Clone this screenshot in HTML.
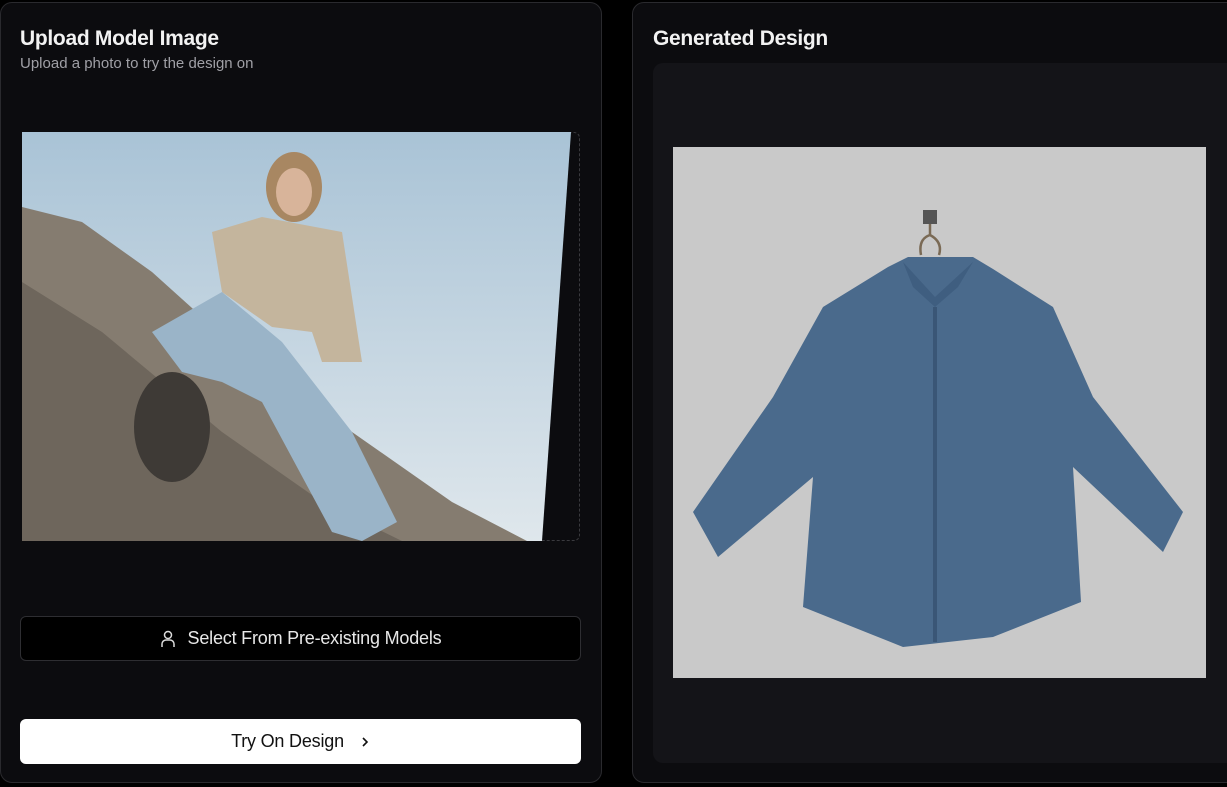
<!DOCTYPE html>
<html><head><style>
body{margin:0;width:1227px;height:787px;background:#000;font-family:"Liberation Sans",sans-serif;overflow:hidden;position:relative}
.card{position:absolute;top:2px;height:781px;background:#0c0c0f;border:1px solid #2a2a2e;border-radius:12px;box-sizing:border-box}
h2{position:absolute;margin:0;color:#f2f2f2;font-size:21px;font-weight:bold;letter-spacing:-0.3px}
.sub{position:absolute;color:#a0a0a6;font-size:15px;letter-spacing:0}
.btn{position:absolute;left:20px;width:561px;border-radius:6px;box-sizing:border-box;display:flex;align-items:center;justify-content:center;font-size:18px;letter-spacing:-0.2px}
</style></head><body>
<div class="card" style="left:0;width:602px"></div>
<h2 style="left:20px;top:27px">Upload Model Image</h2>
<div class="sub" style="left:20px;top:55px">Upload a photo to try the design on</div>
<div style="position:absolute;left:22px;top:132px;width:558px;height:409px;border:1px dashed #3a3a3e;border-radius:6px;box-sizing:border-box"></div>
<svg style="position:absolute;left:22px;top:132px" width="558" height="409">
<defs><linearGradient id="sky" x1="0" y1="0" x2="0" y2="1"><stop offset="0" stop-color="#a9c3d6"/><stop offset="1" stop-color="#dfe7ec"/></linearGradient></defs>
<polygon points="0,0 549,0 520,409 0,409" fill="url(#sky)"/>
<polygon points="0,75 60,90 130,140 230,230 330,300 430,370 505,409 0,409" fill="#857c70"/>
<polygon points="0,150 80,200 200,300 300,370 380,409 0,409" fill="#6e665c"/>
<path d="M190,100 L240,85 L320,100 L340,230 L300,230 L290,200 L250,195 L200,160 Z" fill="#c4b59d"/>
<path d="M130,200 L200,160 L260,210 L330,300 L375,390 L340,409 L310,400 L240,270 L200,250 L160,240 Z" fill="#9ab4c8"/>
<ellipse cx="150" cy="295" rx="38" ry="55" fill="#3e3a36"/>
<ellipse cx="272" cy="55" rx="28" ry="35" fill="#a88762"/>
<ellipse cx="272" cy="60" rx="18" ry="24" fill="#d8b49a"/>
</svg>
<div class="btn" style="top:616px;height:45px;background:#000;border:1px solid #2e2e32;color:#e8e8e8">
<svg width="16" height="18" viewBox="0 0 16 18" style="margin-right:12px"><circle cx="8" cy="5" r="3.5" fill="none" stroke="#ddd" stroke-width="1.5"/><path d="M2,17 V14 A4,4 0 0 1 6,10 H10 A4,4 0 0 1 14,14 V17" fill="none" stroke="#ddd" stroke-width="1.5"/></svg>Select From Pre-existing Models</div>
<div class="btn" style="top:719px;height:45px;background:#fff;color:#111">Try On Design<svg width="10" height="12" viewBox="0 0 10 12" style="margin-left:16px"><path d="M3,2 L7,6 L3,10" fill="none" stroke="#111" stroke-width="1.6"/></svg></div>

<div class="card" style="left:632px;width:610px"></div>
<h2 style="left:653px;top:27px">Generated Design</h2>
<div style="position:absolute;left:653px;top:63px;width:590px;height:700px;background:#141418;border-radius:10px"></div>
<div style="position:absolute;left:673px;top:147px;width:533px;height:531px;background:#c9c9c9"></div>
<svg style="position:absolute;left:673px;top:147px" width="533" height="531">
<rect x="250" y="63" width="14" height="14" fill="#555"/>
<path d="M257,77 V88 Q245,92 248,108 M257,88 Q270,95 266,108" stroke="#7a6a55" stroke-width="2.5" fill="none"/>
<path d="M215,120 L235,110 L300,110 L320,122 L380,160 L420,250 L510,365 L490,405 L400,320 L408,455 L320,490 L230,500 L130,460 L140,330 L45,410 L20,365 L100,250 L150,160 Z" fill="#4a6a8c"/>
<path d="M230,115 L262,150 L300,115 L285,140 L262,160 L240,140 Z" fill="#3f5e80"/>
<line x1="262" y1="160" x2="262" y2="495" stroke="#3a5676" stroke-width="4"/>
</svg>
</body></html>
